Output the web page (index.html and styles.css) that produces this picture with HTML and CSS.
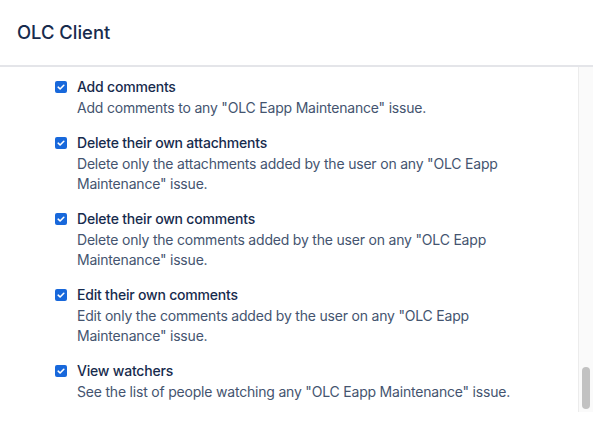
FILE: index.html
```html
<!DOCTYPE html>
<html>
<head>
<meta charset="utf-8">
<link rel="stylesheet" href="styles.css">
</head>
<body>
<div class="dialog">
  <header class="header"><h1 class="title">OLC Client</h1></header>
  <div class="body">
    <ul class="list">
      <li class="item">
        <span class="check"><svg viewBox="0 0 12 12" width="12" height="12"><path d="M3.2 6.2 5.1 8 8.8 4.3" fill="none" stroke="#fff" stroke-width="1.6" stroke-linecap="round" stroke-linejoin="round"/></svg></span>
        <div class="text">
          <div class="label">Add comments</div>
          <div class="desc">Add comments to any "OLC Eapp Maintenance" issue.</div>
        </div>
      </li>
      <li class="item">
        <span class="check"><svg viewBox="0 0 12 12" width="12" height="12"><path d="M3.2 6.2 5.1 8 8.8 4.3" fill="none" stroke="#fff" stroke-width="1.6" stroke-linecap="round" stroke-linejoin="round"/></svg></span>
        <div class="text">
          <div class="label">Delete their own attachments</div>
          <div class="desc">Delete only the attachments added by the user on any "OLC Eapp<br>Maintenance" issue.</div>
        </div>
      </li>
      <li class="item">
        <span class="check"><svg viewBox="0 0 12 12" width="12" height="12"><path d="M3.2 6.2 5.1 8 8.8 4.3" fill="none" stroke="#fff" stroke-width="1.6" stroke-linecap="round" stroke-linejoin="round"/></svg></span>
        <div class="text">
          <div class="label">Delete their own comments</div>
          <div class="desc">Delete only the comments added by the user on any "OLC Eapp<br>Maintenance" issue.</div>
        </div>
      </li>
      <li class="item">
        <span class="check"><svg viewBox="0 0 12 12" width="12" height="12"><path d="M3.2 6.2 5.1 8 8.8 4.3" fill="none" stroke="#fff" stroke-width="1.6" stroke-linecap="round" stroke-linejoin="round"/></svg></span>
        <div class="text">
          <div class="label">Edit their own comments</div>
          <div class="desc">Edit only the comments added by the user on any "OLC Eapp<br>Maintenance" issue.</div>
        </div>
      </li>
      <li class="item">
        <span class="check"><svg viewBox="0 0 12 12" width="12" height="12"><path d="M3.2 6.2 5.1 8 8.8 4.3" fill="none" stroke="#fff" stroke-width="1.6" stroke-linecap="round" stroke-linejoin="round"/></svg></span>
        <div class="text">
          <div class="label">View watchers</div>
          <div class="desc">See the list of people watching any "OLC Eapp Maintenance" issue.</div>
        </div>
      </li>
    </ul>
    <div class="track"><div class="thumb"></div></div>
  </div>
</div>
</body>
</html>
```
FILE: styles.css
```css
html, body {
  margin: 0;
  padding: 0;
  background: #ffffff;
}
body {
  font-family: Inter, "Noto Sans", sans-serif;
  color: #172b4d;
  width: 593px;
  height: 430px;
  overflow: hidden;
}
.dialog {
  display: flex;
  flex-direction: column;
}
.header {
  height: 67px;
  box-sizing: border-box;
  border-bottom: 2px solid #e4e5e9;
  display: flex;
  align-items: center;
  padding-left: 17px;
}
.title {
  margin: 0;
  font-size: 18.4px;
  font-weight: 500;
  color: #172b4d;
  line-height: 24px;
  padding-bottom: 2px;
}
.body {
  display: flex;
  height: 345px;
}
.list {
  flex: 1;
  list-style: none;
  margin: 0;
  padding: 10px 0 0 55px;
  display: flex;
  flex-direction: column;
  gap: 14px;
}
.item {
  display: flex;
  gap: 10px;
}
.check {
  width: 12px;
  height: 12px;
  margin-top: 4px;
  border-radius: 2px;
  background: #1868db;
  display: flex;
  flex-shrink: 0;
}
.label {
  font-size: 14px;
  line-height: 20px;
  font-weight: 450;
  letter-spacing: -0.2px;
  color: #172b4d;
}
.desc {
  margin-top: 1px;
  font-size: 14px;
  line-height: 20.5px;
  letter-spacing: -0.2px;
  color: #44546f;
}
.track {
  width: 14px;
  border-left: 1px solid #ececec;
  background: #fafafa;
  display: flex;
  justify-content: center;
}
.thumb {
  width: 8px;
  height: 42px;
  margin-top: 300px;
  border-radius: 4px;
  background: #c2c2c2;
}
```
